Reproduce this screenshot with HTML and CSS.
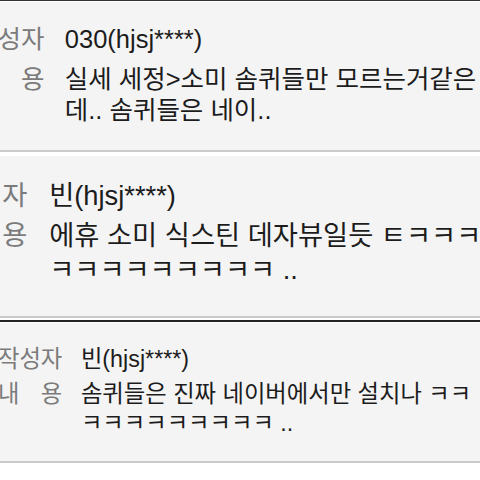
FILE: index.html
```html
<!DOCTYPE html>
<html lang="ko">
<head>
    <meta charset="UTF-8">
    <meta name="viewport" content="width=device-width, initial-scale=1.0">
    <title>댓글</title>
    <link rel="stylesheet" href="styles.css">
</head>
<body>
    <div class="feed">
        <section class="post post-first">
            <dl class="meta">
                <dt>작성자</dt>
                <dd>030(hjsj****)</dd>
                <dt>내 용</dt>
                <dd>실세 세정&gt;소미 솜퀴들만 모르는거같은<br>데.. 솜퀴들은 네이..</dd>
            </dl>
        </section>

        <section class="post post-second">
            <dl class="meta">
                <dt>작성자</dt>
                <dd>빈(hjsj****)</dd>
                <dt>내 용</dt>
                <dd>에휴 소미 식스틴 데자뷰일듯 ㅌㅋㅋㅋㅋ<br>ㅋㅋㅋㅋㅋㅋㅋㅋㅋ ..</dd>
            </dl>
        </section>

        <section class="post post-third">
            <dl class="meta">
                <dt>작성자</dt>
                <dd>빈(hjsj****)</dd>
                <dt>내 용</dt>
                <dd>솜퀴들은 진짜 네이버에서만 설치나 ㅋㅋ<br>ㅋㅋㅋㅋㅋㅋㅋㅋㅋ ..</dd>
            </dl>
        </section>
    </div>
</body>
</html>
```

FILE: styles.css
```css
/* General Styling */
body {
    margin: 0;
    padding: 0;
    background: #fff;
    font-family: "Liberation Sans", "Noto Sans CJK KR", sans-serif;
}

.post {
    background: #f4f4f4;
    border-bottom: 2px solid #cacaca;
    overflow: hidden;
}

/* label / value rows */
.meta {
    display: grid;
    grid-template-columns: 2.76em auto; /* three hangul glyphs */
    column-gap: 0.8em;
    row-gap: 0.3em;
    margin: 0;
    line-height: 1.25;
}

.meta dt {
    color: #7b7b7b;
    text-align: justify;
    text-align-last: justify; /* spreads "내 용" across the column */
}

.meta dd {
    margin: 0;
    color: #1c1c1c;
    white-space: nowrap;
}

/* each card comes from a different zoom level */
.post-first {
    font-size: 25.5px;
    border-top: 1px solid #333;
    box-shadow: inset 0 1px 0 #fff;
    padding: 23px 0 23px;
    margin-bottom: 4px;
}

.post-first .meta {
    margin-left: -26px;
}

.post-second {
    font-size: 27.3px;
    padding: 23px 0 28px;
    margin-bottom: 2px;
}

.post-second .meta {
    margin-left: -48px;
    row-gap: 0.22em;
}

.post-third {
    font-size: 23.3px;
    border-top: 2px solid #222;
    box-shadow: inset 0 1px 0 #fff;
    padding: 23px 0 23px;
}

.post-third .meta {
    margin-left: -2px;
    row-gap: 0.25em;
}
```
